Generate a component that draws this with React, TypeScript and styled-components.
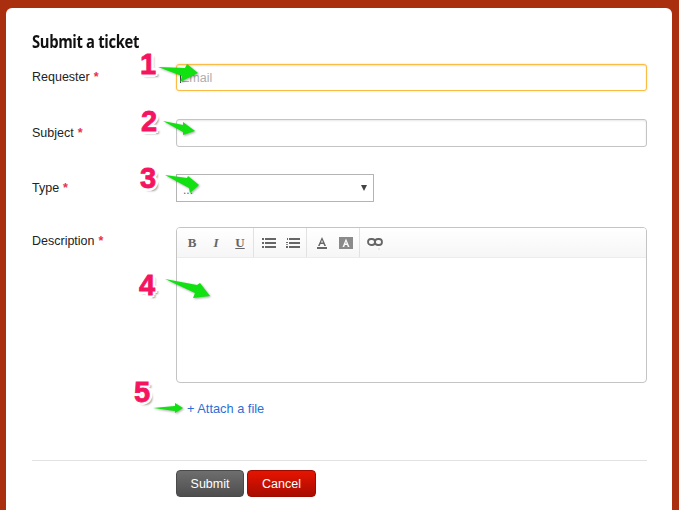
import React from 'react';
import styled, { createGlobalStyle } from 'styled-components';

const GlobalStyle = createGlobalStyle`
  html, body {
    margin: 0;
    height: 100%;
    overflow: hidden;
    background: #a92f0e;
    font-family: "Liberation Sans", Arial, sans-serif;
  }
`;

const Page = styled.div`
  height: 510px;
  padding: 8px 7px 0 6px;
  box-sizing: border-box;
  overflow: hidden;
`;

const Card = styled.div`
  position: relative;
  background: #fff;
  border-radius: 6px 6px 0 0;
  height: 520px;
  padding: 24px 25px 0 26px;
  box-sizing: border-box;
`;

const Title = styled.h2`
  margin: 0 0 12px;
  font-family: "Open Sans", sans-serif;
  font-size: 17px;
  line-height: 20px;
  font-weight: 700;
  letter-spacing: -0.4px;
  color: #111;
  transform: scaleX(0.87);
  transform-origin: left center;
`;

const Row = styled.div<{ $height: number; $gap: number }>`
  display: grid;
  grid-template-columns: 144px 1fr;
  height: ${(p) => p.$height}px;
  margin-bottom: ${(p) => p.$gap}px;
`;

const Label = styled.label<{ $line?: number }>`
  font-size: 12.5px;
  line-height: ${(p) => p.$line ?? 28}px;
  color: #222;
`;

const Star = styled.span`
  color: #e8304f;
  margin-left: 4px;
  font-weight: 700;
`;

const TextInput = styled.input<{ $focus?: boolean }>`
  display: block;
  width: 100%;
  height: 100%;
  box-sizing: border-box;
  padding: 0 4px;
  border: 1px solid ${(p) => (p.$focus ? '#f9bd45' : '#c4c4c4')};
  border-radius: 3px;
  outline: none;
  font-family: inherit;
  font-size: 12.5px;
  box-shadow: ${(p) =>
    p.$focus ? '0 0 2px rgba(249, 189, 69, 0.6), inset 0 1px 2px #e4e4e4' : 'inset 0 1px 2px #e8e8e8'};
  &::placeholder {
    color: #adadad;
  }
`;

const Select = styled.div`
  width: 198px;
  height: 100%;
  box-sizing: border-box;
  border: 1px solid #b4b4b4;
  display: flex;
  align-items: center;
  justify-content: space-between;
  padding: 0 6px 0 6px;
  font-size: 12px;
  color: #666;
`;

const SelectValue = styled.span`
  margin-top: 3px;
`;

const Caret = styled.span`
  width: 0;
  height: 0;
  border-left: 3px solid transparent;
  border-right: 3px solid transparent;
  border-top: 6px solid #444;
`;

const Editor = styled.div`
  height: 100%;
  box-sizing: border-box;
  border: 1px solid #c4c4c4;
  border-radius: 4px;
  overflow: hidden;
`;

const Toolbar = styled.div`
  display: flex;
  height: 29px;
  border-bottom: 1px solid #ececec;
  background: linear-gradient(#ffffff, #f6f6f6);
`;

const ToolGroup = styled.div<{ $left: number }>`
  display: flex;
  align-items: center;
  padding: 0 1px 0 ${(p) => p.$left}px;
  border-right: 1px solid #e2e2e2;
  &:last-child {
    border-right: 0;
  }
`;

const Tool = styled.span`
  width: 24px;
  height: 100%;
  display: flex;
  align-items: center;
  justify-content: center;
`;

const Glyph = styled.span<{ $italic?: boolean; $underline?: boolean }>`
  font-family: "Liberation Serif", serif;
  font-size: 13px;
  font-weight: 700;
  font-style: ${(p) => (p.$italic ? 'italic' : 'normal')};
  text-decoration: ${(p) => (p.$underline ? 'underline' : 'none')};
  color: #666;
`;

const Link = styled.a`
  font-size: 12.8px;
  line-height: 16px;
  color: #2a6fd6;
  margin-left: 11px;
`;

const Divider = styled.hr`
  margin: 0 0 9px;
  border: 0;
  border-top: 1px solid #e2e2e2;
`;

const Actions = styled.div`
  display: flex;
  gap: 3px;
  padding-left: 144px;
`;

const Button = styled.button<{ $danger?: boolean }>`
  height: 27px;
  width: ${(p) => (p.$danger ? 69 : 68)}px;
  padding: 0;
  border-radius: 4px;
  border: 1px solid ${(p) => (p.$danger ? '#9e0b00' : '#4a4a4a')};
  background: ${(p) => (p.$danger ? 'linear-gradient(#e61400, #a80c00)' : 'linear-gradient(#6e6e6e, #4e4e4e)')};
  color: #fff;
  font-family: inherit;
  font-size: 12.5px;
`;

const TextCursor = styled.span`
  position: absolute;
  left: 174px;
  top: 62px;
  width: 1px;
  height: 13px;
  background: #444;
`;

const Marker = styled.span<{ $x: number; $y: number }>`
  position: absolute;
  left: ${(p) => p.$x}px;
  top: ${(p) => p.$y}px;
  font-family: "Liberation Sans", sans-serif;
  font-weight: 700;
  font-size: 29px;
  line-height: 28px;
  color: #f5145f;
  -webkit-text-stroke: 0.8px #f5145f;
  text-shadow: -3px 0 0 #fff, 3px 0 0 #fff, 0 -3px 0 #fff, 0 3px 0 #fff, -2px -2px 0 #fff, 2px 2px 0 #fff,
    -2px 2px 0 #fff, 2px -2px 0 #fff, 3px 3px 2px rgba(0, 0, 0, 0.4);
`;

const Arrow = styled.svg<{ $x: number; $y: number }>`
  position: absolute;
  left: ${(p) => p.$x}px;
  top: ${(p) => p.$y}px;
  filter: drop-shadow(1px 1px 1px rgba(0, 0, 0, 0.35));
`;

const GreenArrow = ({ x, y, w, h, d }: { x: number; y: number; w: number; h: number; d: string }) => (
  <Arrow $x={x} $y={y} width={w} height={h} viewBox={`0 0 ${w} ${h}`}>
    <path d={d} fill="#11e011" />
  </Arrow>
);

const BulletIcon = () => (
  <svg width="14" height="10" viewBox="0 0 14 10" fill="#666">
    <path d="M0 0h2v2H0zM3 0h11v2H3zM0 4h2v2H0zM3 4h11v2H3zM0 8h2v2H0zM3 8h11v2H3z" />
  </svg>
);

const NumberIcon = () => (
  <svg width="14" height="10" viewBox="0 0 14 10" fill="#666">
    <path d="M1 0h1v2H1zM0 4h2v1H0zM0 6h2v.7H0zM0 8h2v2H0zM3 0h11v2H3zM3 4h11v2H3zM3 8h11v2H3z" />
  </svg>
);

const LinkIcon = () => (
  <svg width="16" height="14" viewBox="0 0 16 14" fill="none" stroke="#666" strokeWidth="1.8">
    <rect x="1" y="3" width="7" height="6" rx="3" />
    <rect x="8" y="3" width="7" height="6" rx="3" />
    <path d="M11.5 13h1" stroke="#aaa" strokeWidth="1" />
  </svg>
);

const TextColorIcon = () => (
  <svg width="14" height="14" viewBox="0 0 14 14">
    <path d="M7 1 L11 10 H9.3 L8.5 8 H5.5 L4.7 10 H3 Z M6 6.5 H8 L7 4 Z" fill="#666" fillRule="evenodd" />
    <rect x="2" y="11" width="10" height="2" fill="#666" />
  </svg>
);

const BgColorIcon = () => (
  <svg width="14" height="14" viewBox="0 0 14 14">
    <path d="M0 1 H14 V13 H0 Z M7 2.5 L3.5 11 H5.2 L5.9 9 H8.1 L8.8 11 H10.5 Z M6.4 7.5 H7.6 L7 5.6 Z" fill="#8a8a8a" fillRule="evenodd" />
  </svg>
);

const App = () => {
  return (
    <Page>
      <GlobalStyle />
      <Card>
        <Title>Submit a ticket</Title>
        <Row $height={27} $gap={28}>
          <Label $line={26}>
            Requester<Star>*</Star>
          </Label>
          <TextInput $focus placeholder="Email" />
        </Row>
        <Row $height={28} $gap={27}>
          <Label>
            Subject<Star>*</Star>
          </Label>
          <TextInput />
        </Row>
        <Row $height={26} $gap={27}>
          <Label>
            Type<Star>*</Star>
          </Label>
          <Select>
            <SelectValue>...</SelectValue>
            <Caret />
          </Select>
        </Row>
        <Row $height={156} $gap={18}>
          <Label>
            Description<Star>*</Star>
          </Label>
          <Editor>
            <Toolbar>
              <ToolGroup $left={3}>
                <Tool><Glyph>B</Glyph></Tool>
                <Tool><Glyph $italic>I</Glyph></Tool>
                <Tool><Glyph $underline>U</Glyph></Tool>
              </ToolGroup>
              <ToolGroup $left={3}>
                <Tool><BulletIcon /></Tool>
                <Tool><NumberIcon /></Tool>
              </ToolGroup>
              <ToolGroup $left={3}>
                <Tool><TextColorIcon /></Tool>
                <Tool><BgColorIcon /></Tool>
              </ToolGroup>
              <ToolGroup $left={3}>
                <Tool><LinkIcon /></Tool>
              </ToolGroup>
            </Toolbar>
          </Editor>
        </Row>
        <Row $height={16} $gap={43}>
          <span />
          <Link>+ Attach a file</Link>
        </Row>
        <Divider />
        <Actions>
          <Button>Submit</Button>
          <Button $danger>Cancel</Button>
        </Actions>

        <TextCursor />
        <Marker $x={134} $y={42}>1</Marker>
        <GreenArrow x={151} y={55} w={44} h={22} d="M1 4 L28 5 L30 1 L41 10 L23 19 L25 13 Z" />
        <Marker $x={135} $y={99}>2</Marker>
        <GreenArrow x={156} y={111} w={36} h={20} d="M1 2 L21 6 L21 3 L33 12 L21 16 L21 13 Z" />
        <Marker $x={134} $y={156}>3</Marker>
        <GreenArrow x={158} y={165} w={38} h={22} d="M1 2 L23 5 L24 3 L35 12 L26 20 L25 15 Z" />
        <Marker $x={133} $y={263}>4</Marker>
        <GreenArrow x={157} y={270} w={50} h={24} d="M2 1 L34 7 L37 5 L47 18 L30 20 L32 15 Z" />
        <Marker $x={128} $y={370}>5</Marker>
        <GreenArrow x={146} y={392} w={34} h={16} d="M1 8 L23 6 L23 3 L31 8 L23 13 L23 11 Z" />
      </Card>
    </Page>
  );
};

export default App;
